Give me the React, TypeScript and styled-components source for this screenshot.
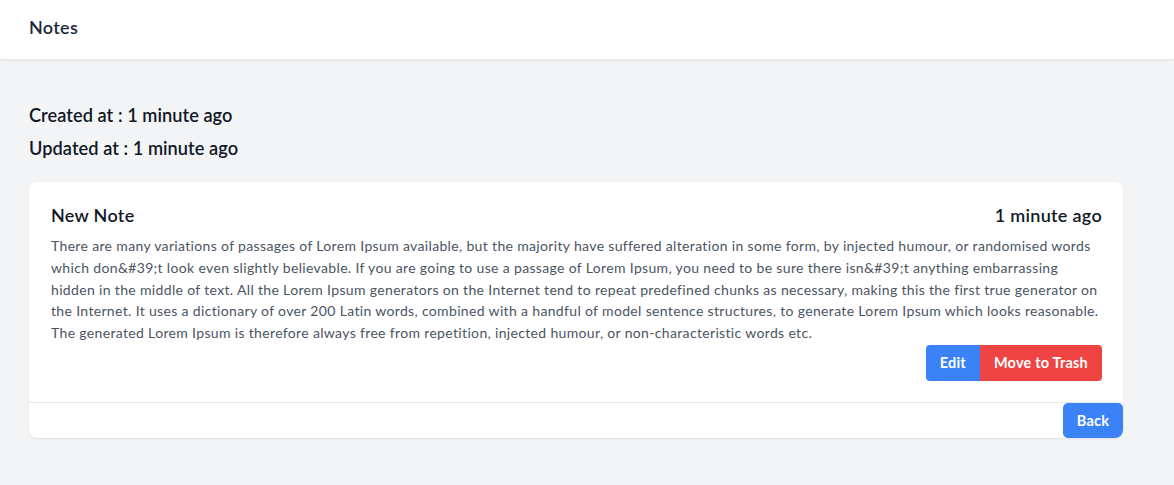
import React from "react";
import styled, { createGlobalStyle } from "styled-components";

const Global = createGlobalStyle`
  html, body { margin: 0; padding: 0; }
  body {
    background: #f3f4f6;
    font-family: Lato, "Noto Sans", sans-serif;
    color: #111827;
  }
`;

const Page = styled.div`
  min-height: 485px;
  background: #f3f4f6;
`;

const Header = styled.header`
  height: 60px;
  background: #ffffff;
  box-shadow: 0 1px 2px rgba(0, 0, 0, 0.05);
  border-bottom: 1px solid #e5e7eb;
  box-sizing: border-box;
  display: flex;
  align-items: center;
  padding: 0 29px 5px;
`;

const HeaderTitle = styled.h2`
  margin: 0;
  font-size: 18px;
  font-weight: 600;
  letter-spacing: 0.3px;
  color: #1f2937;
`;

const Main = styled.main`
  padding: 39px 51px 0 29px;
  display: flex;
  flex-direction: column;
`;

const Meta = styled.div`
  font-size: 18.2px;
  font-weight: 600;
  line-height: 33px;
  letter-spacing: 0.05px;
  color: #111827;
`;

const Card = styled.section`
  margin-top: 17px;
  background: #ffffff;
  border-radius: 8px;
  box-shadow: 0 1px 2px rgba(0, 0, 0, 0.08);
  overflow: hidden;
  display: flex;
  flex-direction: column;
`;

const CardBody = styled.div`
  padding: 21px 21px 21px 22px;
  border-bottom: 1px solid #e5e7eb;
  display: flex;
  flex-direction: column;
`;

const TitleRow = styled.div`
  display: flex;
  justify-content: space-between;
  align-items: center;
  height: 24px;
`;

const Title = styled.h3`
  margin: 0;
  font-size: 18px;
  font-weight: 600;
  letter-spacing: 0.3px;
  color: #111827;
`;

const Time = styled.span`
  font-size: 18px;
  font-weight: 600;
  letter-spacing: 0.3px;
  color: #111827;
`;

const Content = styled.p`
  margin: 8px 0 0;
  font-size: 14px;
  line-height: 21.75px;
  color: #4b5563;
  letter-spacing: 0.34px;
`;

const Actions = styled.div`
  margin-top: 1px;
  display: flex;
  justify-content: flex-end;
`;

const Button = styled.button<{ $tone: "blue" | "red"; $side?: "left" | "right" | "all" }>`
  border: none;
  height: 36px;
  padding: 0 14px;
  font-family: inherit;
  font-size: 14.5px;
  font-weight: 700;
  letter-spacing: 0.2px;
  color: #ffffff;
  background: ${(p) => (p.$tone === "red" ? "#ef4444" : "#3b82f6")};
  border-radius: ${(p) =>
    p.$side === "left" ? "4px 0 0 4px" : p.$side === "right" ? "0 4px 4px 0" : "5px"};
  cursor: pointer;
`;

const Footer = styled.div`
  display: flex;
  justify-content: flex-end;
  height: 35px;
`;

const BackButton = styled(Button)`
  height: 35px;
  padding: 0;
  width: 60px;
`;

const text =
  "There are many variations of passages of Lorem Ipsum available, but the majority have suffered alteration in some form, by injected humour, or randomised words which don&#39;t look even slightly believable. If you are going to use a passage of Lorem Ipsum, you need to be sure there isn&#39;t anything embarrassing hidden in the middle of text. All the Lorem Ipsum generators on the Internet tend to repeat predefined chunks as necessary, making this the first true generator on the Internet. It uses a dictionary of over 200 Latin words, combined with a handful of model sentence structures, to generate Lorem Ipsum which looks reasonable. The generated Lorem Ipsum is therefore always free from repetition, injected humour, or non-characteristic words etc.";

export default function App() {
  return (
    <Page>
      <Global />
      <Header>
        <HeaderTitle>Notes</HeaderTitle>
      </Header>
      <Main>
        <Meta>Created at : 1 minute ago</Meta>
        <Meta>Updated at : 1 minute ago</Meta>
        <Card>
          <CardBody>
            <TitleRow>
              <Title>New Note</Title>
              <Time>1 minute ago</Time>
            </TitleRow>
            <Content>{text}</Content>
            <Actions>
              <Button $tone="blue" $side="left">Edit</Button>
              <Button $tone="red" $side="right">Move to Trash</Button>
            </Actions>
          </CardBody>
          <Footer>
            <BackButton $tone="blue" $side="all">Back</BackButton>
          </Footer>
        </Card>
      </Main>
    </Page>
  );
}
